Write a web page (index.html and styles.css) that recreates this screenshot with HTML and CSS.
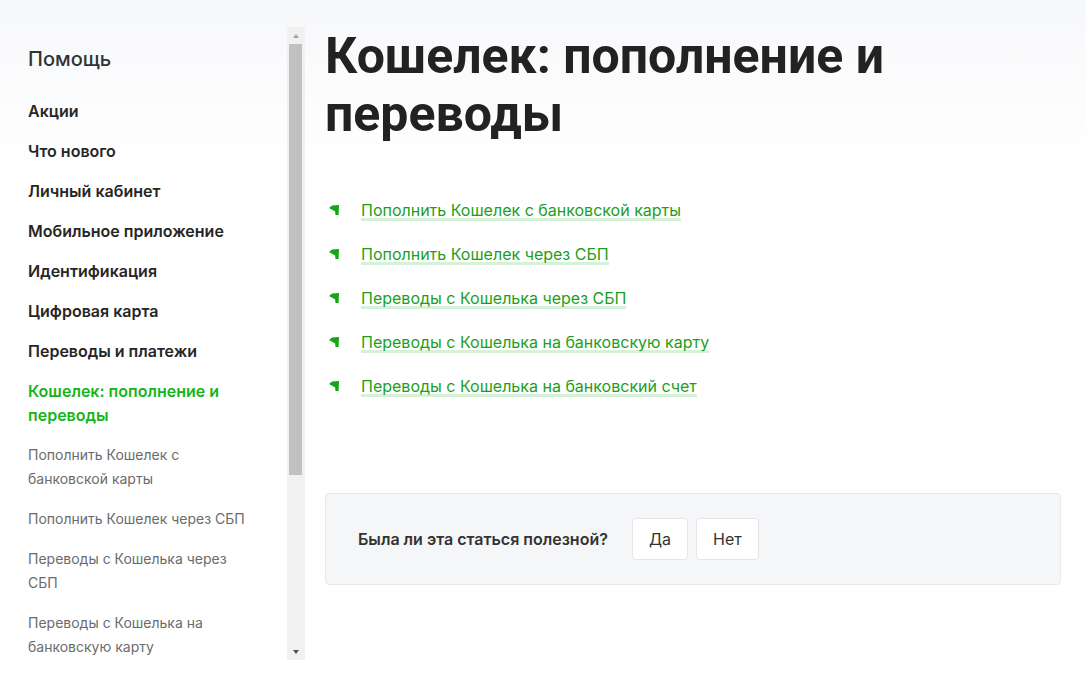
FILE: index.html
```html
<!DOCTYPE html>
<html lang="ru">
<head>
    <meta charset="UTF-8">
    <meta name="viewport" content="width=device-width, initial-scale=1.0">
    <title>Кошелек: пополнение и переводы</title>
    <link rel="stylesheet" href="styles.css">
</head>
<body>
    <div class="page">
        <aside class="sidebar">
            <div class="sidebar-inner">
                <h2 class="sidebar-title">Помощь</h2>
                <ul class="nav">
                    <li><a href="#">Акции</a></li>
                    <li><a href="#">Что нового</a></li>
                    <li><a href="#">Личный кабинет</a></li>
                    <li><a href="#">Мобильное приложение</a></li>
                    <li><a href="#">Идентификация</a></li>
                    <li><a href="#">Цифровая карта</a></li>
                    <li><a href="#">Переводы и платежи</a></li>
                    <li><a href="#" class="active">Кошелек: пополнение и переводы</a></li>
                    <li class="sub"><a href="#">Пополнить Кошелек с банковской карты</a></li>
                    <li class="sub"><a href="#">Пополнить Кошелек через СБП</a></li>
                    <li class="sub"><a href="#">Переводы с Кошелька через СБП</a></li>
                    <li class="sub"><a href="#">Переводы с Кошелька на банковскую карту</a></li>
                </ul>
            </div>
            <div class="scrollbar">
                <span class="scroll-btn up"></span>
                <span class="scroll-thumb"></span>
                <span class="scroll-rest"></span>
                <span class="scroll-btn down"></span>
            </div>
        </aside>

        <main class="content">
            <h1>Кошелек: пополнение и переводы</h1>

            <ul class="articles">
                <li><svg class="arrow" viewBox="0 0 10 10"><path d="M0 3 L3 0.6 L10 0 L9.6 10 L6.4 10 L6.2 6.6 Z"/></svg><a href="#">Пополнить Кошелек с банковской карты</a></li>
                <li><svg class="arrow" viewBox="0 0 10 10"><path d="M0 3 L3 0.6 L10 0 L9.6 10 L6.4 10 L6.2 6.6 Z"/></svg><a href="#">Пополнить Кошелек через СБП</a></li>
                <li><svg class="arrow" viewBox="0 0 10 10"><path d="M0 3 L3 0.6 L10 0 L9.6 10 L6.4 10 L6.2 6.6 Z"/></svg><a href="#">Переводы с Кошелька через СБП</a></li>
                <li><svg class="arrow" viewBox="0 0 10 10"><path d="M0 3 L3 0.6 L10 0 L9.6 10 L6.4 10 L6.2 6.6 Z"/></svg><a href="#">Переводы с Кошелька на банковскую карту</a></li>
                <li><svg class="arrow" viewBox="0 0 10 10"><path d="M0 3 L3 0.6 L10 0 L9.6 10 L6.4 10 L6.2 6.6 Z"/></svg><a href="#">Переводы с Кошелька на банковский счет</a></li>
            </ul>

            <div class="feedback">
                <span class="feedback-question">Была ли эта статься полезной?</span>
                <button>Да</button>
                <button>Нет</button>
            </div>
        </main>
    </div>
</body>
</html>
```

FILE: styles.css
```css
html, body {
    margin: 0;
    padding: 0;
    height: 100%;
}

body {
    font-family: Inter, "Noto Sans", sans-serif;
    color: #222;
    background: linear-gradient(#f7f8fa, #ffffff 170px) no-repeat;
    background-color: #fff;
}

a {
    text-decoration: none;
    color: inherit;
}

ul {
    list-style: none;
    margin: 0;
    padding: 0;
}

.page {
    display: flex;
    align-items: flex-start;
}

/* left menu */
.sidebar {
    display: flex;
    width: 305px;
    height: 633px;
    margin-top: 27px;
    flex-shrink: 0;
}

.sidebar-inner {
    flex: 1;
    overflow: hidden;
    padding: 20px 34px 0 28px;
}

.sidebar-title {
    margin: 0 0 20px;
    font-size: 20px;
    line-height: 24px;
    font-weight: 500;
    color: #333;
}

.nav li a {
    display: block;
    padding: 8px 0;
    font-size: 16px;
    line-height: 24px;
    font-weight: 600;
    color: #262626;
}

.nav li a.active {
    color: #17b41a;
}

.nav li.sub a {
    font-size: 14px;
    font-weight: 400;
    color: #6b6b6b;
}

/* fake scrollbar of the menu */
.scrollbar {
    display: flex;
    flex-direction: column;
    width: 18px;
    background: #f1f1f1;
}

.scroll-btn {
    display: flex;
    align-items: center;
    justify-content: center;
    height: 17px;
}

.scroll-btn::before {
    content: "";
    border-left: 3.5px solid transparent;
    border-right: 3.5px solid transparent;
}

.scroll-btn.up::before {
    border-bottom: 4px solid #a3a3a3;
}

.scroll-btn.down::before {
    border-top: 4px solid #505050;
}

.scroll-thumb {
    height: 431px;
    margin: 0 3px 0 2px;
    background: #c1c1c1;
}

.scroll-rest {
    flex: 1;
}

/* article */
.content {
    flex: 1;
    padding: 0 25px 0 20px;
}

.content h1 {
    margin: 27px 0 0;
    font-family: Roboto, "Liberation Sans", sans-serif;
    font-size: 50px;
    line-height: 58px;
    font-weight: 700;
    color: #222;
}

.articles {
    margin-top: 45px;
}

.articles li {
    display: flex;
    align-items: center;
    height: 44px;
    font-size: 16px;
}

.arrow {
    width: 10px;
    height: 10px;
    margin: 0 22px 0 4px;
    fill: #14a614;
}

.articles a {
    color: #1ba01b;
    line-height: 22px;
    background: linear-gradient(#d6f2d6, #d6f2d6) left bottom / 100% 3px no-repeat;
}

.feedback {
    display: flex;
    align-items: center;
    margin-top: 85px;
    height: 90px;
    padding: 0 32px;
    background: #f5f6f8;
    border: 1px solid #e7e9ec;
    border-radius: 4px;
}

.feedback-question {
    font-size: 16px;
    font-weight: 600;
    color: #333;
    margin-right: 24px;
}

.feedback button {
    height: 42px;
    padding: 0 16px;
    margin-right: 8px;
    background: #fff;
    border: 1px solid #e3e5e8;
    border-radius: 4px;
    font-family: Inter, sans-serif;
    font-size: 16px;
    color: #333;
}
```
